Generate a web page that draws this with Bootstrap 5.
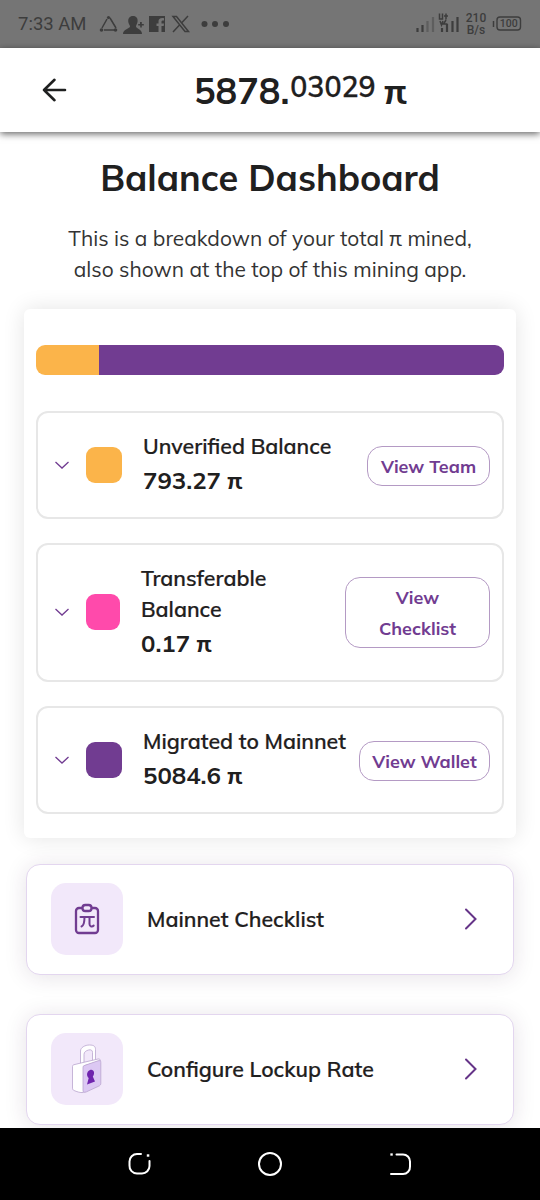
<!DOCTYPE html>
<html lang="en">
<head>
<meta charset="utf-8">
<meta name="viewport" content="width=device-width, initial-scale=1">
<title>Balance Dashboard</title>
<link href="https://cdn.jsdelivr.net/npm/bootstrap@5.3.0/dist/css/bootstrap.min.css" rel="stylesheet">
<style>
  :root { --violet: #713c91; --amber: #fbb44a; --pink: #ff4aab; }
  body { font-family: Mulish, Muli, Lato, "Open Sans", sans-serif; color: #1f2020; background: #fff; font-weight: 600; }
  .phone { width: 540px; height: 1200px; overflow: hidden; }
  .statusbar { height: 48px; background: #757575; color: #3d3d3d; font-family: Roboto, sans-serif; font-weight: 400; padding: 0 18px; flex: none; }
  .clock { font-size: 18.5px; width: 81px; padding-top: 2px; white-space: nowrap; }
  .rate { font-size: 12px; line-height: 12px; width: 32px; font-weight: 500; }
  .topbar { height: 84px; box-shadow: 0 2px 7px rgba(0,0,0,.6); z-index: 2; flex: none; }
  .back { width: 28px; margin-left: 40px; }
  .total { font-size: 36px; line-height: 40px; font-weight: 700; margin-left: 126px; padding-top: 2px; }
  .frac { font-size: 28.4px; font-weight: 600; line-height: 30px; margin: 0 9px 0 1px; -webkit-text-stroke: .3px; }
  main { min-height: 0; }
  h1 { font-size: 36px; line-height: 44px; font-weight: 700; margin: 24px 0 23px; }
  .intro { font-size: 20.95px; line-height: 31px; font-weight: 400; color: #333; margin-bottom: 24px; }
  .panel { margin: 0 24px; padding: 36px 12px 24px; border-radius: 6px; box-shadow: 0 0 22px rgba(0,0,0,.11); background: #fff; }
  .stack { height: 30px; border-radius: 9px; margin-bottom: 36px; }
  .bal { border: 2px solid #e7e7e7; border-radius: 12px; padding: 0 12px 0 16px; height: 108px; margin-bottom: 24px; }
  .bal.tall { height: 139px; padding-bottom: 1px; }
  .swatch { width: 36px; height: 36px; border-radius: 9px; margin: 0 21px 0 16px; flex: none; }
  .tall .swatch { width: 34px; }
  .lbl { font-size: 21.35px; line-height: 31px; white-space: nowrap; -webkit-text-stroke: .2px; }
  .val { font-size: 24px; line-height: 37px; font-weight: 700; }
  .pill { --bs-btn-color: var(--violet); --bs-btn-border-color: #b49ac4; --bs-btn-border-radius: 15px; --bs-btn-padding-x: 0; --bs-btn-padding-y: 4px; --bs-btn-font-size: 18px; --bs-btn-font-weight: 700; --bs-btn-line-height: 31px; flex: none; border-width: 1.5px; padding-bottom: 3px; margin-top: 2px; }
  .tall .pill { margin-top: 0; }
  .link-card { margin: 0 26px; height: 111px; border: 1.5px solid #e3d6ef; border-radius: 14px; background: #fff; box-shadow: 0 2px 22px rgba(60,30,70,.13); padding: 0 35px 1px 24px; }
  .tile { width: 72px; height: 72px; border-radius: 15px; background: #f2e8fa; margin-right: 24px; }
  .link-text { font-size: 21.35px; line-height: 31px; padding-top: 1px; -webkit-text-stroke: .2px; }
  .sysnav { height: 72px; background: #000; flex: none; z-index: 3; padding: 0 127px; }
</style>
</head>
<body>
<div class="phone d-flex flex-column">
  <div class="statusbar d-flex align-items-center">
    <span class="clock">7:33 AM</span>
    <svg width="132" height="20" viewBox="99 14 132 20" fill="#3d3d3d">
      <g fill="none" stroke="#3d3d3d" stroke-width="1.500"><path d="M107 19l-5 9M110 18l6 10M104 30h10"/></g>
      <circle cx="108.500" cy="17.500" r="1.600"/><circle cx="101.500" cy="30" r="1.800"/><circle cx="115.500" cy="30" r="1.800"/>
      <path d="M133 16c3.500 0 5 2.500 4.500 6-.3 2-1.500 3-1.500 4.500 0 2 6 2.500 6 7.500h-19c0-5 7-5.500 7-7.500 0-1.500-1.500-2.500-1.700-4.500-.4-3.500 1.200-6 4.700-6zM140 22h1.800v2h2v1.600h-2v2h-1.600v-2h-2V24h1.800z"/>
      <path fill-rule="evenodd" d="M149 16h16v16h-3.500v-6h2.200l.3-2.500h-2.500v-1.800c0-1 .5-1.200 2.500-1.200v-2.300c-4-.5-5.500.8-5.500 3.500v1.800h-2v2.500h2v6H149z"/>
      <path fill="none" stroke="#3d3d3d" stroke-width="1.500" d="M173 16.500h3.500l12 15H185zM188 16l-6.500 7M179.500 25l-6.500 7"/>
      <circle cx="204.500" cy="24" r="3"/><circle cx="215" cy="24" r="3"/><circle cx="226" cy="24" r="3"/>
    </svg>
    <svg class="ms-auto" width="46" height="22" viewBox="414 13 46 22" fill="none" stroke="#3d3d3d" stroke-width="2.200">
      <path d="M417.500 28v4M422.500 25v7M442 28v4M447 24v8M452.500 21v11M457.500 17v15"/><path d="M427.500 21v11M433 17v15" stroke="#5e5e5e"/>
      <path stroke-width="1.500" d="M439.500 13.500v5.500h3v-5.500M446 13.500v6M444 16h4M440 21l1.500 4 1.500-4M446 20l-2.500 4h4"/>
    </svg>
    <span class="rate text-center">210<br>B/s</span>
    <svg width="30" height="16" viewBox="492 16 30 16"><rect x="497" y="17" width="23.500" height="13" rx="3" fill="none" stroke="#3d3d3d" stroke-width="1.400"/><path d="M493.500 21v6" stroke="#3d3d3d" stroke-width="1.500"/><text x="508.800" y="27.400" text-anchor="middle" font-size="10.500" font-weight="500" font-family="Roboto" fill="#3d3d3d">100</text></svg>
  </div>

  <header class="topbar d-flex align-items-center bg-white position-relative">
    <svg class="back" height="28" viewBox="40 76 28 28" fill="none" stroke="#1f2020" stroke-width="2.600" stroke-linecap="round" stroke-linejoin="round"><path d="M65 90H44M54.500 79.800L44 90l10.500 10.200"/></svg>
    <div class="total d-flex"><span>5878.</span><span class="frac">03029</span><span>π</span></div>
  </header>

  <main class="flex-grow-1 overflow-hidden">
    <h1 class="text-center">Balance Dashboard</h1>
    <p class="intro text-center">This is a breakdown of your total π mined,<br>also shown at the top of this mining app.</p>

    <section class="panel">
      <div class="stack d-flex overflow-hidden">
        <div style="width:13.5%;background:var(--amber)"></div><div class="flex-grow-1" style="background:var(--violet)"></div>
      </div>
      <div class="bal d-flex align-items-center">
        <svg width="16" height="12" viewBox="0 0 16 12" fill="none" stroke="#713c91" stroke-width="1.300"><path d="M1.500 3L8 9l6.500-6"/></svg>
        <div class="swatch" style="background:var(--amber)"></div>
        <div><div class="lbl">Unverified Balance</div><div class="val">793.27 π</div></div>
        <button class="btn pill ms-auto" style="width:123px">View Team</button>
      </div>
      <div class="bal tall d-flex align-items-center">
        <svg width="16" height="12" viewBox="0 0 16 12" fill="none" stroke="#713c91" stroke-width="1.300"><path d="M1.500 3L8 9l6.500-6"/></svg>
        <div class="swatch" style="background:var(--pink)"></div>
        <div><div class="lbl">Transferable<br>Balance</div><div class="val">0.17 π</div></div>
        <button class="btn pill ms-auto" style="width:145px">View<br>Checklist</button>
      </div>
      <div class="bal d-flex align-items-center mb-0">
        <svg width="16" height="12" viewBox="0 0 16 12" fill="none" stroke="#713c91" stroke-width="1.300"><path d="M1.500 3L8 9l6.500-6"/></svg>
        <div class="swatch" style="background:var(--violet)"></div>
        <div><div class="lbl">Migrated to Mainnet</div><div class="val">5084.6 π</div></div>
        <button class="btn pill ms-auto" style="width:131px">View Wallet</button>
      </div>
    </section>

    <div class="link-card d-flex align-items-center" style="margin-top:26px">
      <div class="tile d-flex align-items-center justify-content-center">
        <svg width="26" height="32" viewBox="0 0 26 32" fill="none" stroke="#713c91" stroke-width="2.300" stroke-linecap="round"><path d="M8 5H5a3 3 0 0 0-3 3v19a3 3 0 0 0 3 3h16a3 3 0 0 0 3-3V8a3 3 0 0 0-3-3h-3"/><rect x="8.500" y="2" width="9" height="6" rx="2.800"/><path stroke-width="2" d="M6.500 14h13.500M10.500 14c0 5-.5 8.500-3 9.500M15.500 14v7c0 2.800 2.800 3.200 4.200 1.500"/></svg>
      </div>
      <span class="link-text">Mainnet Checklist</span>
      <svg class="ms-auto" width="14" height="24" viewBox="0 0 14 24" fill="none" stroke="#653488" stroke-width="2" stroke-linecap="round"><path d="M2 2.500l9.500 9.500L2 21.500"/></svg>
    </div>
    <div class="link-card d-flex align-items-center" style="margin-top:39px">
      <div class="tile d-flex align-items-center justify-content-center">
        <svg width="32" height="52" viewBox="0 0 32 52" stroke="#b9a4ce" stroke-width=".8" stroke-linejoin="round"><path fill="#fff" d="M9.500 21V8c0-3.500 4.500-6 9-6s6 1.500 6 4.500v12l-3 1V9.500c0-2.300-1.500-3.200-4-2.500s-4.500 2-4.500 4.500V21z"/><path fill="#fff" d="M1.500 23.500c0-1 .5-1.500 1.500-1.800l9-2.200 15-3.500c1.500-.3 2.500.5 2.500 1.800L12.500 23v26.500c-3.500.5-7-1-9.500-2-1-.5-1.500-1.200-1.500-2.500z"/><path fill="#dcc8f3" d="M12 24.500c0-1.300.8-1.800 2-2.200l13-4.500c1.800-.5 2.800 0 2.800 1.500v21c0 1.500-.8 2.300-2 2.800l-12.300 5.700c-2.300 1-3.500.5-3.500-1.500z"/><path stroke="none" fill="#6f24ae" d="M19 27c3.500-1.500 5.500 3 2.800 6.500l2.200 5-8 3 1.700-6.500c-2.500-2-2.200-6.500 1.300-8z"/></svg>
      </div>
      <span class="link-text">Configure Lockup Rate</span>
      <svg class="ms-auto" width="14" height="24" viewBox="0 0 14 24" fill="none" stroke="#653488" stroke-width="2" stroke-linecap="round"><path d="M2 2.500l9.500 9.500L2 21.500"/></svg>
    </div>
  </main>

  <nav class="sysnav d-flex justify-content-between align-items-center">
    <svg width="26" height="26" viewBox="0 0 26 26" fill="none" stroke="#fff" stroke-width="2" stroke-linecap="round"><path d="M14 3h-4a7.500 7.500 0 0 0-7.500 7.500v4A7.500 7.500 0 0 0 10 22.500h5a7.500 7.500 0 0 0 7.500-7.500v-5"/><path d="M21 4.500h.1" stroke-width="2.400" stroke-linecap="square"/></svg>
    <svg width="26" height="26" viewBox="0 0 26 26" fill="none" stroke="#fff" stroke-width="2"><circle cx="13" cy="13" r="11"/></svg>
    <svg width="26" height="26" viewBox="0 0 26 26" fill="none" stroke="#fff" stroke-width="2" stroke-linecap="round"><path d="M9.500 3.500h6.500a7 7 0 0 1 7 7v5a7 7 0 0 1-7 7.500H4"/><path d="M4.500 3.500h.1" stroke-width="2.300" stroke-linecap="square"/></svg>
  </nav>
</div>
<script src="https://cdn.jsdelivr.net/npm/bootstrap@5.3.0/dist/js/bootstrap.bundle.min.js"></script>
</body>
</html>
